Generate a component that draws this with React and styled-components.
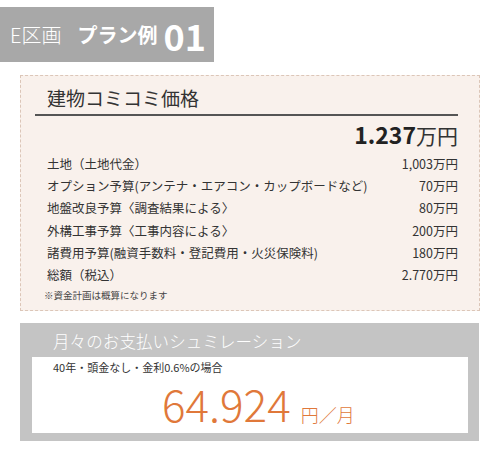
import React from "react";
import styled, { createGlobalStyle } from "styled-components";

const GlobalStyle = createGlobalStyle`
  body {
    margin: 0;
    background: #ffffff;
    font-family: "Noto Sans CJK JP", "Noto Sans", sans-serif;
    color: #333333;
  }
`;

const Page = styled.div`
  width: 500px;
  height: 460px;
  padding-top: 7px;
  box-sizing: border-box;
`;

const Header = styled.div`
  width: 214px;
  height: 55px;
  background: #a8a8a8;
  color: #ffffff;
  display: flex;
  align-items: center;
  padding-left: 10px;
  box-sizing: border-box;
  gap: 16px;
`;

const Area = styled.span`
  font-size: 20px;
  font-weight: 300;
`;

const Plan = styled.span`
  font-size: 20px;
  font-weight: 700;
  display: flex;
  align-items: center;
  gap: 6px;
`;

const PlanNo = styled.span`
  font-size: 36px;
  font-weight: 700;
  line-height: 1;
`;

const Card = styled.div`
  margin: 13px 20px 0;
  height: 236px;
  box-sizing: border-box;
  background: #f9f1ec;
  border: 1px dashed #dcc6b8;
  padding: 8px 21px 0 14px;
`;

const CardTitle = styled.h2`
  margin: 0;
  padding: 0 0 3px 12px;
  font-size: 19px;
  font-weight: 400;
  line-height: 27px;
  color: #333333;
  border-bottom: 2px solid #555555;
`;

const Total = styled.div`
  text-align: right;
  margin-top: 3px;
  line-height: 30px;
`;

const TotalNum = styled.span`
  font-size: 23px;
  font-weight: 700;
  color: #222222;
`;

const TotalUnit = styled.span`
  font-size: 21px;
  font-weight: 400;
  color: #333333;
`;

const Rows = styled.div`
  padding-left: 12px;
  margin-top: 1px;
`;

const Row = styled.div`
  display: flex;
  justify-content: space-between;
  font-size: 12.5px;
  line-height: 22.2px;
  color: #333333;
`;

const Note = styled.div`
  font-size: 9.5px;
  line-height: 18px;
  padding-left: 9px;
  color: #444444;
`;

const Sim = styled.div`
  margin: 12px 21px 0 20px;
  height: 118px;
  box-sizing: border-box;
  background: #c4c4c4;
  padding: 0 11px 8px 12px;
  display: flex;
  flex-direction: column;
`;

const SimTitle = styled.div`
  height: 34px;
  line-height: 36px;
  padding-left: 21px;
  color: #ffffff;
  font-size: 16.5px;
  font-weight: 300;
  letter-spacing: 0.1px;
`;

const SimBody = styled.div`
  flex: 1;
  background: #ffffff;
  padding: 2px 0 0 21px;
`;

const SimCond = styled.div`
  font-size: 11px;
  line-height: 16px;
  color: #333333;
`;

const Monthly = styled.div`
  display: flex;
  align-items: baseline;
  padding-left: 109px;
  color: #e0783a;
  margin-top: 8px;
`;

const MonthlyNum = styled.span`
  font-size: 44px;
  font-weight: 300;
  line-height: 40px;
`;

const MonthlyUnit = styled.span`
  font-size: 18px;
  font-weight: 300;
  margin-left: 10px;
`;

const items = [
  ["土地（土地代金）", "1,003万円"],
  ["オプション予算(アンテナ・エアコン・カップボードなど)", "70万円"],
  ["地盤改良予算〈調査結果による〉", "80万円"],
  ["外構工事予算〈工事内容による〉", "200万円"],
  ["諸費用予算(融資手数料・登記費用・火災保険料)", "180万円"],
  ["総額（税込）", "2.770万円"],
];

export default function App() {
  return (
    <Page>
      <GlobalStyle />
      <Header>
        <Area>E区画</Area>
        <Plan>
          プラン例<PlanNo>01</PlanNo>
        </Plan>
      </Header>
      <Card>
        <CardTitle>建物コミコミ価格</CardTitle>
        <Total>
          <TotalNum>1.237</TotalNum>
          <TotalUnit>万円</TotalUnit>
        </Total>
        <Rows>
          {items.map(([label, value]) => (
            <Row key={label}>
              <span>{label}</span>
              <span>{value}</span>
            </Row>
          ))}
        </Rows>
        <Note>※資金計画は概算になります</Note>
      </Card>
      <Sim>
        <SimTitle>月々のお支払いシュミレーション</SimTitle>
        <SimBody>
          <SimCond>40年・頭金なし・金利0.6%の場合</SimCond>
          <Monthly>
            <MonthlyNum>64.924</MonthlyNum>
            <MonthlyUnit>円／月</MonthlyUnit>
          </Monthly>
        </SimBody>
      </Sim>
    </Page>
  );
}
